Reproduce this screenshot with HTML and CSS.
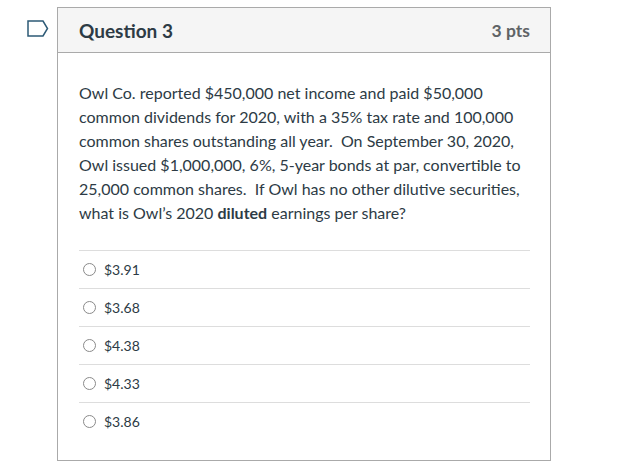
FILE: index.html
```html
<!DOCTYPE html>
<html>
<head>
<meta charset="utf-8">
<link rel="stylesheet" href="styles.css">
</head>
<body>
<div class="page">
  <div class="flag-col">
    <svg class="flag" width="22" height="17" viewBox="0 0 22 17"><path d="M1 1 H16 L20.5 8.5 L16 16 H1 Z" fill="none" stroke="#2d5a76" stroke-width="1.5" stroke-linejoin="miter"/></svg>
  </div>
  <div class="card">
    <div class="card-header">
      <span class="q-title">Question 3</span>
      <span class="q-pts">3 pts</span>
    </div>
    <div class="card-body">
      <p class="q-text">Owl Co. reported $450,000 net income and paid $50,000 common dividends for 2020, with a 35% tax rate and 100,000 common shares outstanding all year.&nbsp; On September 30, 2020, Owl issued $1,000,000, 6%, 5-year bonds at par, convertible to 25,000 common shares.&nbsp; If Owl has no other dilutive securities, what is Owl’s 2020 <strong>diluted</strong> earnings per share?</p>
      <div class="answers">
        <label class="answer"><span class="radio"></span><span>$3.91</span></label>
        <label class="answer"><span class="radio"></span><span>$3.68</span></label>
        <label class="answer"><span class="radio"></span><span>$4.38</span></label>
        <label class="answer"><span class="radio"></span><span>$4.33</span></label>
        <label class="answer"><span class="radio"></span><span>$3.86</span></label>
      </div>
    </div>
  </div>
</div>
</body>
</html>
```

FILE: styles.css
```css
html, body {
  margin: 0;
  padding: 0;
  background: #fff;
}
body {
  font-family: Lato, "Liberation Sans", sans-serif;
  color: #2d3b45;
}
.page {
  display: flex;
  align-items: flex-start;
  padding-top: 7px;
}
.flag-col {
  width: 57px;
  padding-top: 13px;
  padding-left: 27px;
  box-sizing: border-box;
}
.flag {
  display: block;
}
.card {
  width: 494px;
  border: 1px solid #aaaaaa;
  box-sizing: border-box;
  height: 454px;
}
.card-header {
  height: 44px;
  background: #f5f5f5;
  border-bottom: 1px solid #aaaaaa;
  display: flex;
  align-items: center;
  justify-content: space-between;
  padding: 0 20px 0 21px;
}
.q-title {
  font-size: 19px;
  font-weight: 700;
  color: #2d3b45;
}
.q-pts {
  font-size: 17.5px;
  font-weight: 700;
  color: #5f6366;
}
.card-body {
  padding: 28px 20px 0 21px;
}
.q-text {
  margin: 0;
  font-size: 16px;
  line-height: 24px;
  color: #2d3b45;
}
.q-text strong {
  font-weight: 700;
}
.answers {
  margin-top: 25px;
}
.answer {
  display: flex;
  align-items: center;
  height: 37px;
  border-top: 1px solid #dddddd;
  font-size: 14px;
  color: #2d3b45;
  padding-left: 4px;
  gap: 8px;
}
.radio {
  width: 11px;
  height: 11px;
  border: 1px solid #8a8a8a;
  border-radius: 50%;
  display: inline-block;
  background: #fff;
}
```
